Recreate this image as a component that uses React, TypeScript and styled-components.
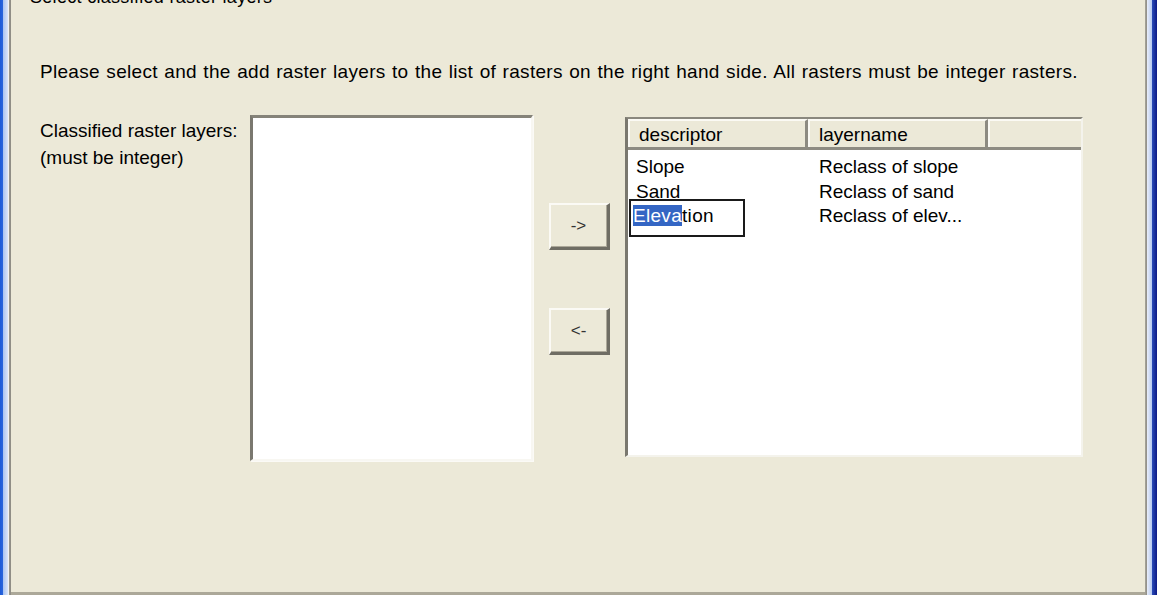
import styled, { createGlobalStyle } from "styled-components";

const GlobalStyle = createGlobalStyle`
  html, body {
    margin: 0;
    padding: 0;
    background: #ffffff;
    overflow: hidden;
  }
  body {
    font-family: "Liberation Sans", Arial, sans-serif;
    color: #000;
  }
`;

const rows = [
  { descriptor: "Slope", layername: "Reclass of slope" },
  { descriptor: "Sand", layername: "Reclass of sand" },
  { descriptor: "Elevation", layername: "Reclass of elev...", editing: true },
];

const App = () => {
  return (
    <>
      <GlobalStyle />
      <Screen>
        <LeftEdge />
        <Client>
          <Title>Select classified raster layers</Title>
          <Intro>
            Please select and the add raster layers to the list of rasters on the right hand side. All rasters must be
            integer rasters.
          </Intro>
          <Body>
            <Labels>
              <div>Classified raster layers:</div>
              <div>(must be integer)</div>
            </Labels>
            <ListBox />
            <ButtonColumn>
              <PushButton>-&gt;</PushButton>
              <PushButton>&lt;-</PushButton>
            </ButtonColumn>
            <ListView>
              <HeaderRow>
                <HeaderCell $width={180}>descriptor</HeaderCell>
                <HeaderCell $width={180}>layername</HeaderCell>
                <HeaderCell $width={96} />
              </HeaderRow>
              <Rows>
                {rows.map((row) => (
                  <Row key={row.descriptor}>
                    <Cell $width={180} $pad={8}>
                      {row.editing ? (
                        <EditBox>
                          <Selected>Eleva</Selected>tion
                        </EditBox>
                      ) : (
                        row.descriptor
                      )}
                    </Cell>
                    <Cell $width={180} $pad={11}>{row.layername}</Cell>
                  </Row>
                ))}
              </Rows>
            </ListView>
          </Body>
        </Client>
        <RightEdge />
        <Outside />
      </Screen>
    </>
  );
};

const Screen = styled.div`
  display: flex;
  width: 1170px;
  height: 595px;
  overflow: hidden;
`;

const LeftEdge = styled.div`
  width: 11px;
  flex: none;
  background: linear-gradient(
    to right,
    #1c5ad8 0px,
    #2a66dc 3px,
    #a9c3f0 3px,
    #dbe6fb 8px,
    #f4f3ee 8px,
    #f4f3ee 9px,
    #9d9b92 9px,
    #8c8a82 11px
  );
`;

const RightEdge = styled.div`
  width: 12px;
  flex: none;
  background: linear-gradient(
    to right,
    #a8a69c 0px,
    #8e8c84 2px,
    #e9eefa 2px,
    #b5c8ef 7px,
    #2b4cb8 7px,
    #0c1a86 12px
  );
`;

const Outside = styled.div`
  width: 13px;
  flex: none;
  background: #ffffff;
`;

const Client = styled.div`
  flex: 1;
  background: #ece9d8;
  border-bottom: 3px solid #aca899;
  font-size: 19px;
  display: flex;
  flex-direction: column;
  padding: 0 0 0 29px;
`;

const Title = styled.div`
  margin: -13px 0 0 -10px;
  font-size: 18px;
  line-height: 20px;
  height: 20px;
  white-space: nowrap;
  letter-spacing: 0.3px;
`;

const Intro = styled.div`
  margin-top: 53px;
  line-height: 24px;
  white-space: nowrap;
  letter-spacing: 0.3px;
  word-spacing: 0.9px;
`;

const Body = styled.div`
  display: flex;
  margin-top: 31px;
  align-items: flex-start;
`;

const Labels = styled.div`
  width: 210px;
  flex: none;
  line-height: 27px;
  padding-top: 2px;
`;

const ListBox = styled.div`
  width: 283px;
  height: 346px;
  box-sizing: border-box;
  flex: none;
  background: #ffffff;
  border-top: 3px solid #858379;
  border-left: 3px solid #7a786f;
  border-right: 2px solid #f8f7f2;
  border-bottom: 2px solid #f8f7f2;
  box-shadow: 1px 1px 0 #fbfaf6;
`;

const ButtonColumn = styled.div`
  width: 92px;
  flex: none;
  display: flex;
  flex-direction: column;
  align-items: center;
  gap: 58px;
  padding-top: 88px;
`;

const PushButton = styled.button`
  width: 61px;
  height: 47px;
  box-sizing: border-box;
  background: #ece9d8;
  font-family: "Liberation Sans", Arial, sans-serif;
  font-size: 17px;
  color: #333;
  padding: 0;
  border-top: 2px solid #fbfaf5;
  border-left: 2px solid #fbfaf5;
  border-right: 3px solid #6f6d64;
  border-bottom: 3px solid #6f6d64;
  box-shadow: inset -1px -1px 0 #aca899;
`;

const ListView = styled.div`
  margin-top: 2px;
  width: 458px;
  height: 340px;
  box-sizing: border-box;
  flex: none;
  background: #ffffff;
  border-top: 2px solid #8a887e;
  border-left: 3px solid #7a786f;
  border-right: 2px solid #f4f3ec;
  border-bottom: 2px solid #f4f3ec;
  display: flex;
  flex-direction: column;
  overflow: hidden;
`;

const HeaderRow = styled.div`
  display: flex;
  height: 31px;
  flex: none;
  background: #ece9d8;
  border-bottom: 3px solid #8d8b82;
  box-sizing: border-box;
`;

const HeaderCell = styled.div<{ $width: number }>`
  width: ${(p) => p.$width}px;
  flex: none;
  box-sizing: border-box;
  padding-left: 11px;
  line-height: 28px;
  border-top: 2px solid #fbfaf4;
  border-right: 3px solid #8d8b82;
  box-shadow: inset 2px 0 0 #fbfaf4;
  white-space: nowrap;
`;

const Rows = styled.div`
  display: flex;
  flex-direction: column;
  padding-top: 5px;
`;

const Row = styled.div`
  display: flex;
  height: 24.5px;
  line-height: 24px;
`;

const Cell = styled.div<{ $width: number; $pad: number }>`
  width: ${(p) => p.$width}px;
  flex: none;
  box-sizing: border-box;
  padding-left: ${(p) => p.$pad}px;
  position: relative;
  white-space: nowrap;
`;

const EditBox = styled.div`
  position: absolute;
  left: 1px;
  top: -5px;
  width: 116px;
  height: 38px;
  box-sizing: border-box;
  border: 2px solid #1a1a1a;
  background: #ffffff;
  padding-left: 2px;
  line-height: 30px;
  letter-spacing: 0.3px;
`;

const Selected = styled.span`
  background: #3466c4;
  color: #ffffff;
`;

export default App;
